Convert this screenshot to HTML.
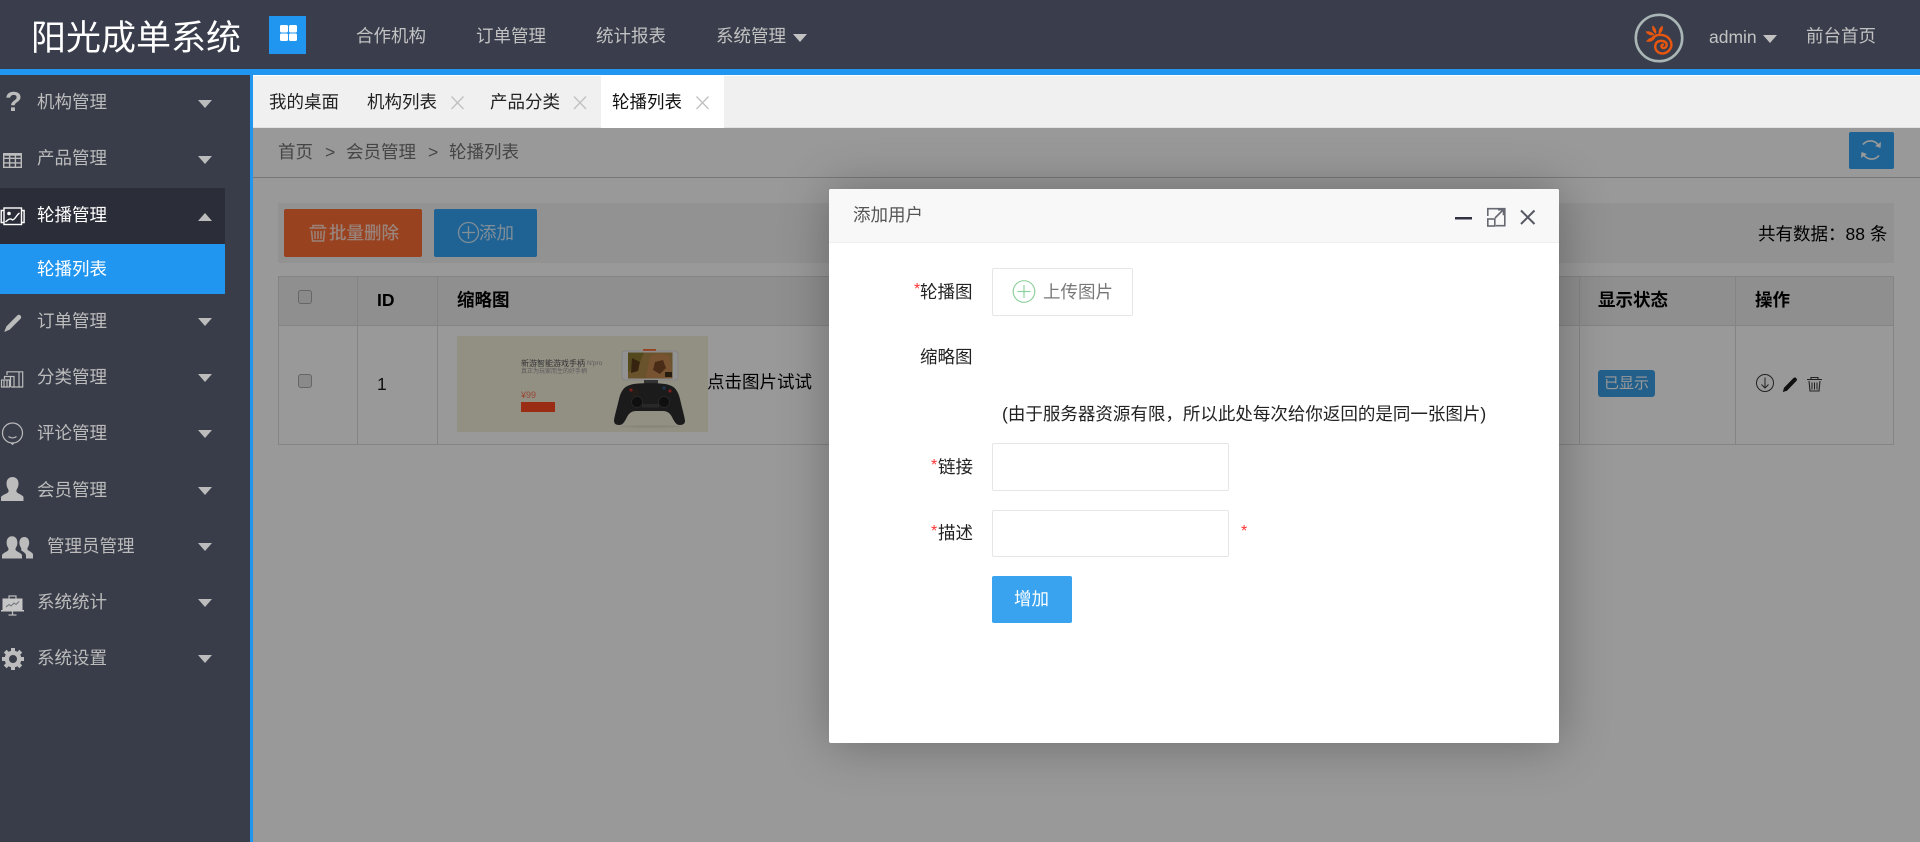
<!DOCTYPE html>
<html lang="zh-CN"><head><meta charset="utf-8"><title>阳光成单系统</title>
<style>
*{box-sizing:border-box}
html,body{margin:0;padding:0;width:1920px;height:842px;overflow:hidden;background:#393d49;font-family:"Liberation Sans","Noto Sans CJK SC",sans-serif;font-size:17.5px}
.t{position:absolute;white-space:nowrap;line-height:24px;height:24px}
.a{position:absolute}
.nav{color:#c2c2c2}
.side{color:#bcbcbc}
.car{position:absolute;width:0;height:0;border-left:7.5px solid transparent;border-right:7.5px solid transparent;border-top:8px solid #bcbcbc}
.up{border-top:0;border-bottom:8px solid #bcbcbc}
.tab{color:#222}
.b{font-weight:700;color:#000}
.lab{color:#222}
.st{color:#f33;font-size:16px}
.box{position:absolute;background:#fff;border:1px solid #e6e6e6;border-radius:2px}
svg{position:absolute;overflow:visible}
</style></head><body>

<!-- header -->
<div class="a" style="left:0;top:0;width:1920px;height:69px;background:#3a3e4c"></div>
<div class="a" style="left:0;top:69px;width:1920px;height:6px;background:#2196f0"></div>
<div class="t" style="left:31px;top:18px;height:42px;line-height:42px;font-size:35px;color:#fff">阳光成单系统</div>
<div class="a" style="left:269px;top:16px;width:37px;height:38px;background:#2196f0"></div>
<svg style="left:0;top:0" width="1" height="1"><g fill="#fff"><rect x="280" y="25" width="8" height="7.500" rx="1.500"/><rect x="289" y="25" width="8" height="7.500" rx="1.500"/><rect x="280" y="33.500" width="8" height="7.500" rx="1.500"/><rect x="289" y="33.500" width="8" height="7.500" rx="1.500"/></g></svg>
<div class="t nav" style="left:356px;top:24px">合作机构</div>
<div class="t nav" style="left:476px;top:24px">订单管理</div>
<div class="t nav" style="left:596px;top:24px">统计报表</div>
<div class="t nav" style="left:716px;top:24px">系统管理</div>
<div class="car" style="left:793px;top:34px;border-top-color:#c2c2c2"></div>

<svg style="left:0;top:0" width="1" height="1">
<circle cx="1659" cy="38" r="23.200" fill="none" stroke="#aab6b6" stroke-width="2.600"/>
<path d="M1653 37.500C1658 33 1668 34 1671 42C1673 49 1667 53.500 1662 53.500C1656 53 1654 47.500 1656 43.500C1658 40 1664.500 40 1666.500 43.500C1667.500 47 1664 49 1662 47.500C1661 46.500 1661 45 1663 44.500" fill="none" stroke="#e8560f" stroke-width="2.400" stroke-linecap="round"/>
<g fill="#e8560f"><path d="M1645.500 31.500c4-1 7 .5 9 3.500-3.500 1-7 0-9-3.500z"/><path d="M1646 41.500c2.500-3.500 6-5 9.500-4-2 3.500-5.500 5-9.500 4z"/><path d="M1652.500 25.500c3 2 4.500 5 3.500 8.500-3-2-4.500-5-3.500-8.500z"/><path d="M1662.500 25.500c1 3.500 0 6.500-3.500 9-1-3.500 0-6.500 3.500-9z"/></g>
</svg>
<div class="t nav" style="left:1709px;top:25px">admin</div>
<div class="car" style="left:1763px;top:35px;border-top-color:#c2c2c2"></div>
<div class="t nav" style="left:1806px;top:24px">前台首页</div>

<!-- sidebar -->
<div class="a" style="left:250px;top:75px;width:3px;height:767px;background:#2196f0"></div>
<div class="a" style="left:0;top:188px;width:225px;height:56px;background:#2b2e38"></div>
<div class="a" style="left:0;top:244px;width:225px;height:50px;background:#2196f0"></div>

<div class="t side" style="left:37px;top:90px">机构管理</div><div class="car" style="left:198px;top:100px"></div>
<div class="t side" style="left:37px;top:146px">产品管理</div><div class="car" style="left:198px;top:156px"></div>
<div class="t" style="left:37px;top:203px;color:#fff">轮播管理</div><div class="car up" style="left:198px;top:213px"></div>
<div class="t" style="left:37px;top:257px;color:#fff">轮播列表</div>
<div class="t side" style="left:37px;top:309px">订单管理</div><div class="car" style="left:198px;top:318px"></div>
<div class="t side" style="left:37px;top:365px">分类管理</div><div class="car" style="left:198px;top:374px"></div>
<div class="t side" style="left:37px;top:421px">评论管理</div><div class="car" style="left:198px;top:430px"></div>
<div class="t side" style="left:37px;top:478px">会员管理</div><div class="car" style="left:198px;top:487px"></div>
<div class="t side" style="left:47px;top:534px">管理员管理</div><div class="car" style="left:198px;top:543px"></div>
<div class="t side" style="left:37px;top:590px">系统统计</div><div class="car" style="left:198px;top:599px"></div>
<div class="t side" style="left:37px;top:646px">系统设置</div><div class="car" style="left:198px;top:655px"></div>

<div class="t" style="left:5px;top:87px;height:30px;line-height:30px;font-size:28px;font-weight:700;color:#bcbcbc">?</div>
<svg style="left:0;top:0" width="1" height="1">
<!-- grid -->
<g fill="none" stroke="#bcbcbc" stroke-width="1.400"><rect x="3.700" y="153.700" width="17.600" height="13.600"/><path d="M3.700 158.300h17.600M3.700 162.900h17.600M9.600 153.700v13.600M15.400 153.700v13.600"/></g>
<path d="M3.700 153.700h17.600v2h-17.600z" fill="#bcbcbc"/>
<!-- image -->
<g fill="none" stroke="#fff" stroke-width="1.400"><rect x="4" y="208" width="17.500" height="16.500"/><path d="M4 210.500H1.200v12H4M21.500 210.500h2.600v12h-2.600"/><path d="M5.500 222c3-3 5-4 7-2 3-1 4-5 7-7"/></g>
<circle cx="9" cy="213.500" r="1.800" fill="#fff"/>
<!-- pencil -->
<path d="M17.500 315.200c1-.7 2.200-.5 3 .4s.9 2.100.2 3L9.700 329.600l-5.500 2.400 2.200-5.600z" fill="#bcbcbc"/>
<!-- category -->
<g fill="none" stroke="#bcbcbc" stroke-width="1.200"><rect x="1.500" y="380" width="8" height="7"/><path d="M4 380v7M7 380v7"/><path d="M4.500 379v-2.500h9.500v10.500"/><path d="M7 375v-3.200h15.700v15.200H11M19 372v15"/><path d="M10.500 376.500v10.500"/></g>
<!-- smile -->
<g fill="none" stroke="#bcbcbc" stroke-width="1.200"><circle cx="12.500" cy="433" r="10"/><path d="M8.500 436.500c2.500 1.800 5.500 1.800 8 0"/></g>
<path d="M10.500 443l2 2.200 2-2.200" fill="#bcbcbc"/>
<!-- user -->
<path d="M1 501v-3.500c0-2 4-3 7-5 1-1 .7-2.500 0-3.500-1-1.500-1.500-3.500-1.500-5.500 0-4 2.500-6.500 6-6.500s6 2.500 6 6.500c0 2-.5 4-1.500 5.500-.7 1-1 2.500 0 3.500 3 2 6.500 3 6.500 5V501z" fill="#bcbcbc"/>
<!-- users -->
<path d="M2 558.500v-3c0-2 3.500-3 6-5 .8-.8.600-2 0-3-.9-1.300-1.400-3-1.400-5 0-4 2.300-6.300 5.400-6.300s5.400 2.300 5.400 6.300c0 2-.5 3.700-1.400 5-.6 1-.8 2.200 0 3 2.500 2 6 3 6 5v3z" fill="#bcbcbc"/>
<path d="M26 558.500v-3c0-1.800-2.400-3.700-5-5.200.7-.9.300-2-.3-3-.8-1.200-1.300-2.700-1.300-4.500 0-3.600 2-5.800 4.900-5.800s4.900 2.200 4.900 5.800c0 1.800-.5 3.300-1.300 4.500-.6 1-.8 2 0 2.800 2 1.500 5.100 2.500 5.100 4.500v3.900z" fill="#bcbcbc"/>
<!-- board -->
<g fill="none" stroke="#bcbcbc"><path d="M9 599v-3h7v3" stroke-width="1.200"/><path d="M12.500 611v4M8.500 615h8" stroke-width="1.300"/></g>
<path d="M2.500 598.500h20V610h1.500v1.500H1V610h1.500z" fill="#c6c6c6"/>
<path d="M6 607l3-2.500 2 1.500 3-3 2 1.500 3-3" fill="none" stroke="#6c7078" stroke-width="1"/>
<!-- gear -->
<g><circle cx="13" cy="659" r="6.200" fill="none" stroke="#bcbcbc" stroke-width="4.400"/>
<g stroke="#bcbcbc" stroke-width="4"><path d="M13 648v4M13 666v4M2 659h4M20 659h4M5.200 651.200l2.800 2.800M18 664l2.800 2.800M20.800 651.200L18 654M8 664l-2.800 2.800"/></g></g>
</svg>

<!-- tab bar -->
<div class="a" style="left:253px;top:75px;width:1667px;height:53px;background:#f0f0f0;border-top:1px solid #fff;border-bottom:1px solid #e2e2e2"></div>
<div class="a" style="left:601px;top:76px;width:123px;height:52px;background:#fff"></div>
<div class="t tab" style="left:269px;top:90px">我的桌面</div>
<div class="t tab" style="left:367px;top:90px">机构列表</div>
<div class="t tab" style="left:490px;top:90px">产品分类</div>
<div class="t tab" style="left:612px;top:90px;color:#111">轮播列表</div>
<svg style="left:0;top:0" width="1" height="1"><g stroke="#c0c0c0" stroke-width="1.300" fill="none"><path d="M451.500 96.500l12 12.500M463.500 96.500l-12 12.500"/><path d="M574 96.500l12 12.500M586 96.500l-12 12.500"/><path d="M696.500 96.500l12 12.500M708.500 96.500l-12 12.500"/></g></svg>

<!-- iframe region -->
<div class="a" style="left:253px;top:128px;width:1667px;height:714px;overflow:hidden;background:#fff">
<div class="a" style="left:-253px;top:-128px;width:1920px;height:842px">

<div class="a" style="left:253px;top:177px;width:1667px;height:1px;background:#c8c8c8"></div>
<div class="t" style="left:278px;top:140px;color:#747474">首页</div>
<div class="t" style="left:325px;top:140px;color:#747474">&gt;</div>
<div class="t" style="left:346px;top:140px;color:#747474">会员管理</div>
<div class="t" style="left:428px;top:140px;color:#747474">&gt;</div>
<div class="t" style="left:449px;top:140px;color:#747474">轮播列表</div>
<div class="a" style="left:1849px;top:132px;width:45px;height:37px;background:#34a5f7;border-radius:2px"></div>
<svg style="left:0;top:0" width="1" height="1"><g fill="none" stroke="#fff" stroke-width="1.600"><path d="M1863 144.500a9.500 9.500 0 0 1 15.500 1"/><path d="M1879 155.500a9.500 9.500 0 0 1-15.500-1"/></g><path d="M1875 146l5.500 2 .5-6z" fill="#fff"/><path d="M1867 154l-5.500-2-.5 6z" fill="#fff"/></svg>

<!-- toolbar -->
<div class="a" style="left:278px;top:203px;width:1616px;height:60px;background:#f3f3f3"></div>
<div class="a" style="left:284px;top:209px;width:138px;height:48px;background:#ff6e35;border-radius:2px"></div>
<div class="a" style="left:434px;top:209px;width:103px;height:48px;background:#34a5f7;border-radius:2px"></div>
<svg style="left:0;top:0" width="1" height="1">
<g fill="none" stroke="#fff" stroke-width="1.500" opacity=".75"><path d="M309.500 228h17M313 228v-2.500h10v2.500M311.500 230.500l1 10.500h11l1-10.500M315 231v8M318 231v8M321 231v8"/></g>
<g fill="none" stroke="#fff" stroke-width="1.300" opacity=".8"><circle cx="468.500" cy="232.500" r="10"/><path d="M468.500 226v13M462 232.500h13"/></g>
</svg>
<div class="t" style="left:329px;top:221px;color:#fff;opacity:.75;font-weight:500">批量删除</div>
<div class="t" style="left:479px;top:221px;color:#fff;opacity:.8">添加</div>
<div class="t" style="left:1758px;top:222px;color:#000">共有数据：88 条</div>

<!-- table -->
<div class="a" style="left:278px;top:276px;width:1616px;height:168.500px;border:1px solid #ddd;background:#fff"></div>
<div class="a" style="left:279px;top:277px;width:1614px;height:48px;background:#eeeeee"></div>
<div class="a" style="left:279px;top:325px;width:1614px;height:1px;background:#ddd"></div>
<div class="a" style="left:357px;top:277px;width:1px;height:167px;background:#ddd"></div>
<div class="a" style="left:437px;top:277px;width:1px;height:167px;background:#ddd"></div>
<div class="a" style="left:1579px;top:277px;width:1px;height:167px;background:#ddd"></div>
<div class="a" style="left:1735px;top:277px;width:1px;height:167px;background:#ddd"></div>

<div class="a" style="left:298px;top:290px;width:14px;height:14px;background:#e6e6e6;border:1px solid #aaa;border-radius:3px"></div>
<div class="a" style="left:298px;top:374px;width:14px;height:14px;background:#e6e6e6;border:1px solid #aaa;border-radius:3px"></div>
<div class="t b" style="left:377px;top:288px">ID</div>
<div class="t b" style="left:457px;top:288px">缩略图</div>
<div class="t b" style="left:1598px;top:288px">显示状态</div>
<div class="t b" style="left:1755px;top:288px">操作</div>
<div class="t" style="left:377px;top:372px;color:#1a1a1a">1</div>
<div class="t" style="left:707px;top:370px;color:#000">点击图片试试</div>

<!-- thumbnail -->
<div class="a" style="left:457px;top:336px;width:251px;height:96px;background:#f4eedb"></div>
<div class="t" style="left:521px;top:352px;font-size:8px;color:#555">新游智能游戏手柄</div>
<div class="t" style="left:587px;top:352px;font-size:6.500px;color:#999">N'pro</div>
<div class="t" style="left:521px;top:360px;font-size:6px;color:#999">真正为玩家而生的好手柄</div>
<div class="t" style="left:521px;top:383px;font-size:9px;color:#ff7a5a">¥99</div>
<div class="a" style="left:521px;top:402px;width:34px;height:9.500px;background:#ff4a20"></div>
<svg style="left:0;top:0" width="1" height="1">
<rect x="643" y="349" width="13" height="2.500" fill="#ff6a30"/>
<rect x="622" y="351" width="56" height="29" rx="3" fill="#f4f4f4" stroke="#d0d0d0" stroke-width=".6"/>
<rect x="628" y="352.500" width="44.500" height="26" fill="#b08a4a"/>
<path d="M628 352.500h16l-5 12-11 8z" fill="#8d7a30"/>
<path d="M650 356c6-3 14-3 20 1l2 21h-26z" fill="#c98a52"/>
<path d="M632 358l8 4-2 9-7 2z" fill="#5a3d1c"/>
<path d="M655 362l8-2 3 8-6 6-7-4z" fill="#7a4a28"/>
<rect x="665" y="372" width="7" height="5" fill="#40301a"/>
<rect x="644" y="380" width="14" height="6" fill="#555"/>
<path d="M630 385c6-2.500 33-2.500 39 0 6 1.500 9 6 11 14 2 9 5 19 5 22 0 2.500-2 4-5 4-3.500 0-5-2-8-8-2-4-5-6-9-6h-27c-4 0-7 2-9 6-3 6-4.500 8-8 8-3 0-5-1.500-5-4 0-3 3-13 5-22 2-8 5-12.500 11-14z" fill="#2d2d2d"/>
<circle cx="635" cy="393" r="4" fill="#3a302a"/><circle cx="637" cy="402" r="5.500" fill="#1a1a1a" stroke="#444" stroke-width=".8"/><circle cx="664" cy="402" r="5.500" fill="#1a1a1a" stroke="#444" stroke-width=".8"/>
<circle cx="631" cy="390" r="1.600" fill="#c33"/><circle cx="670" cy="391" r="1.600" fill="#c33"/><circle cx="664" cy="388" r="1.800" fill="#357"/>
<rect x="642" y="404" width="17" height="3.500" fill="#444"/>
<ellipse cx="651" cy="426.500" rx="30" ry="1.500" fill="#e4dfcc"/>
</svg>

<!-- status -->
<div class="a" style="left:1598px;top:370px;width:57px;height:27px;border-radius:3px;background:#3a9fe6"></div>
<div class="t" style="left:1604px;top:372px;font-size:15px;color:#fff">已显示</div>
<svg style="left:0;top:0" width="1" height="1">
<g fill="none" stroke="#3a3a3a" stroke-width="1"><circle cx="1765" cy="383" r="8.500"/><path d="M1765 377.500v10M1761.500 384.500l3.500 3.500 3.500-3.500"/></g>
<path d="M1793.500 378c1-.8 2-.6 2.800.2s.9 1.800.2 2.600l-9.500 10-4.200 1.200 1.200-4.200z" fill="#1c1c1c"/>
<g fill="none" stroke="#3a3a3a" stroke-width="1.100"><path d="M1807 379.500h15M1811 379.500v-2h7v2M1809 381l1 10h9l1-10"/></g><path d="M1812 382.500v7M1814.500 382.500v7M1817 382.500v7" stroke="#333" stroke-width="1"/>
</svg>

<!-- shade -->
<div class="a" style="left:253px;top:128px;width:1667px;height:714px;background:rgba(0,0,0,.4)"></div>

<!-- modal -->
<div class="a" style="left:829px;top:189px;width:730px;height:554px;background:#fff;border-radius:2px;box-shadow:1px 1px 50px rgba(0,0,0,.3)"></div>
<div class="a" style="left:829px;top:189px;width:730px;height:54px;background:#f8f8f8;border-bottom:1px solid #eee;border-radius:2px 2px 0 0"></div>
<div class="t" style="left:853px;top:203px;color:#555">添加用户</div>
<svg style="left:0;top:0" width="1" height="1">
<rect x="1455" y="217" width="17" height="2.500" fill="#2f3242"/>
<g fill="none" stroke="#666872" stroke-width="1.600"><path d="M1487.800 216v-7.300h17v17h-9"/><rect x="1487.800" y="219" width="7" height="7"/><path d="M1495 218l8-8M1498 209.700h5.500v5.500"/></g>
<path d="M1521 210.500l13.500 13.500M1534.500 210.500l-13.500 13.500" stroke="#555762" stroke-width="2" fill="none"/>
</svg>

<span class="t st" style="left:914px;top:278px">*</span><div class="t lab" style="left:920px;top:280px">轮播图</div>
<div class="box" style="left:992px;top:268px;width:141px;height:48px"></div>
<svg style="left:0;top:0" width="1" height="1"><g fill="none" stroke="#8fd19e" stroke-width="1.200"><circle cx="1024" cy="291.500" r="10.800"/><path d="M1024 285v13M1017.500 291.500h13"/></g></svg>
<div class="t" style="left:1043px;top:280px;color:#777">上传图片</div>
<div class="t lab" style="left:920px;top:345px">缩略图</div>
<div class="t lab" style="left:1002px;top:402px">(由于服务器资源有限，所以此处每次给你返回的是同一张图片)</div>

<span class="t st" style="left:931px;top:454px">*</span><div class="t lab" style="left:938px;top:455px">链接</div>
<div class="box" style="left:992px;top:443px;width:237px;height:48px"></div>
<span class="t st" style="left:931px;top:520px">*</span><div class="t lab" style="left:938px;top:521px">描述</div>
<div class="box" style="left:992px;top:510px;width:237px;height:47px"></div>
<span class="t st" style="left:1241px;top:520px">*</span>
<div class="a" style="left:992px;top:576px;width:80px;height:47px;background:#39a3ef;border-radius:2px"></div>
<div class="t" style="left:1014px;top:587px;color:#fff">增加</div>

</div></div>
</body></html>
